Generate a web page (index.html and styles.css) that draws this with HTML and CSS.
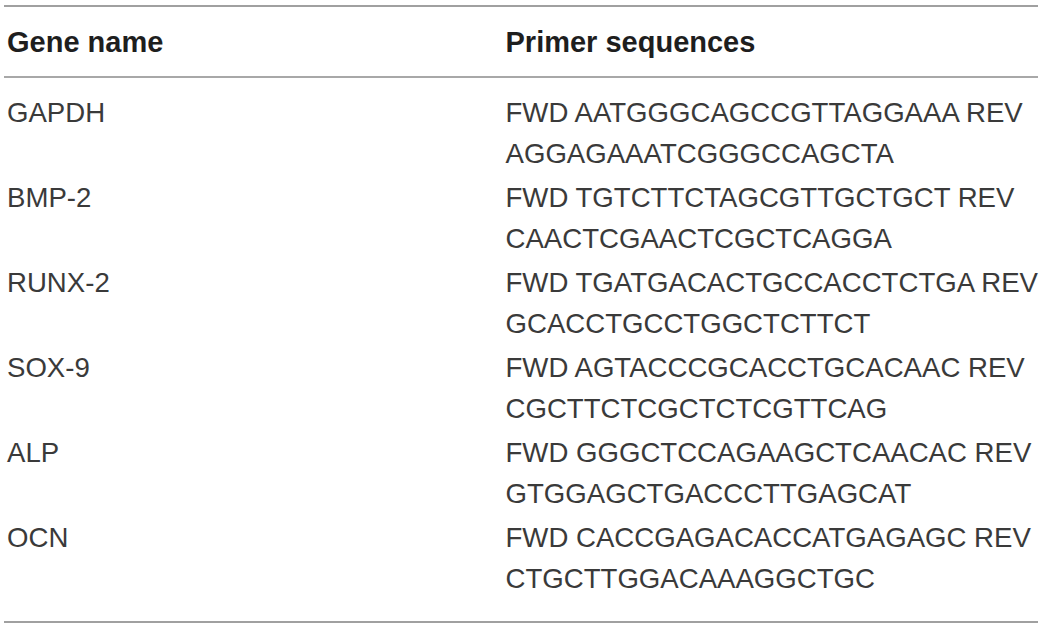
FILE: index.html
```html
<!DOCTYPE html>
<html>
<head>
<meta charset="utf-8">
<link rel="stylesheet" href="styles.css">
</head>
<body>
<div class="wrap">
<table class="primers">
  <thead>
    <tr><th class="col-gene">Gene name</th><th class="col-seq">Primer sequences</th></tr>
  </thead>
  <tbody>
    <tr><td>GAPDH</td><td>FWD AATGGGCAGCCGTTAGGAAA REV<br>AGGAGAAATCGGGCCAGCTA</td></tr>
    <tr><td>BMP-2</td><td>FWD TGTCTTCTAGCGTTGCTGCT REV<br>CAACTCGAACTCGCTCAGGA</td></tr>
    <tr><td>RUNX-2</td><td>FWD TGATGACACTGCCACCTCTGA REV<br>GCACCTGCCTGGCTCTTCT</td></tr>
    <tr><td>SOX-9</td><td>FWD AGTACCCGCACCTGCACAAC REV<br>CGCTTCTCGCTCTCGTTCAG</td></tr>
    <tr><td>ALP</td><td>FWD GGGCTCCAGAAGCTCAACAC REV<br>GTGGAGCTGACCCTTGAGCAT</td></tr>
    <tr><td>OCN</td><td>FWD CACCGAGACACCATGAGAGC REV<br>CTGCTTGGACAAAGGCTGC</td></tr>
  </tbody>
</table>
</div>
</body>
</html>
```

FILE: styles.css
```css
html, body {
  margin: 0;
  padding: 0;
  background: #ffffff;
}

.wrap {
  padding: 5px 6px 0 4px;
}

.primers {
  width: 1034px;
  border-collapse: collapse;
  border-top: 2px solid #a0a0a0;
  border-bottom: 2px solid #a0a0a0;
  font-family: "Liberation Sans", Arial, sans-serif;
}

.primers th {
  text-align: left;
  font-weight: bold;
  font-size: 29px;
  line-height: 41px;
  color: #1e1e1e;
  padding: 15px 0 13px 3px;
  border-bottom: 2px solid #a8a8a8;
  vertical-align: top;
}

.primers .col-gene {
  width: 496px;
}

.primers td {
  font-size: 27.6px;
  line-height: 41px;
  color: #3a3a3a;
  padding: 0 0 3px 3px;
  vertical-align: top;
  white-space: nowrap;
}

.primers tbody tr:first-child td {
  padding-top: 14px;
}

.primers tbody tr:last-child td {
  padding-bottom: 22px;
}
```
